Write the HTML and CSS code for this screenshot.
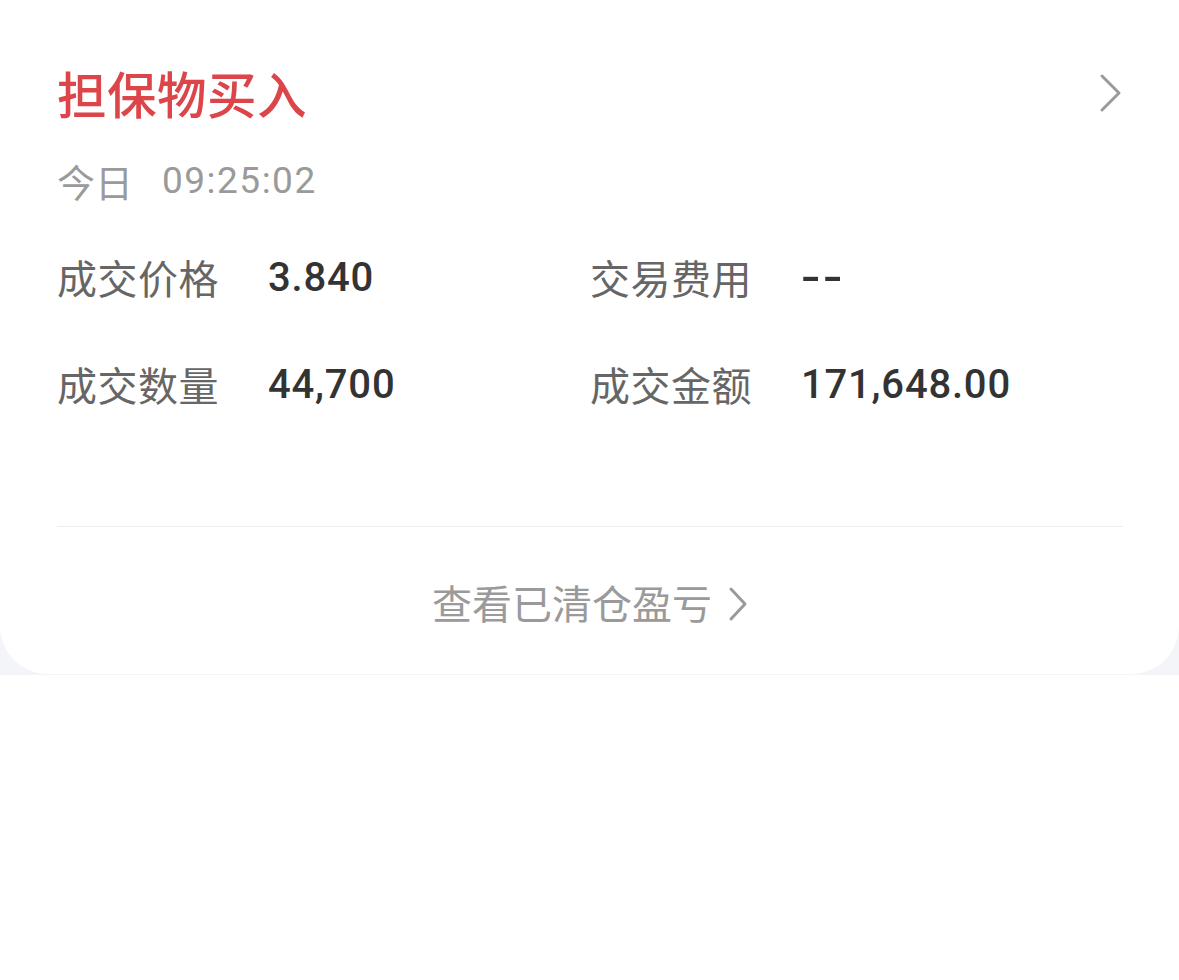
FILE: index.html
```html
<!DOCTYPE html>
<html lang="zh">
<head>
<meta charset="utf-8">
<title>担保物买入</title>
<link rel="stylesheet" href="styles.css">
</head>
<body>
<div class="wrap">
  <div class="card">
    <div class="head">
      <div class="title">担保物买入</div>
      <svg class="chev" width="24" height="40" viewBox="0 0 24 40"><path d="M3 3 L20 20 L3 37" fill="none" stroke="#9a9a9a" stroke-width="3" stroke-linecap="round" stroke-linejoin="round"/></svg>
    </div>
    <div class="time"><span class="day">今日</span><span class="clock">09:25:02</span></div>
    <div class="grid">
      <div class="cell"><span class="label">成交价格</span><span class="value">3.840</span></div>
      <div class="cell"><span class="label">交易费用</span><span class="value dash">--</span></div>
      <div class="cell"><span class="label">成交数量</span><span class="value">44,700</span></div>
      <div class="cell"><span class="label">成交金额</span><span class="value">171,648.00</span></div>
    </div>
    <div class="divider"></div>
    <div class="foot">
      <span class="link">查看已清仓盈亏</span>
      <svg class="chev-s" width="20" height="36" viewBox="0 0 20 36"><path d="M3 3 L17 18 L3 33" fill="none" stroke="#9a9a9a" stroke-width="3" stroke-linecap="round" stroke-linejoin="round"/></svg>
    </div>
  </div>
</div>
</body>
</html>
```

FILE: styles.css
```css
html, body {
  margin: 0;
  padding: 0;
  background: #ffffff;
}
body {
  font-family: "Noto Sans CJK SC", "Noto Sans", sans-serif;
}
.wrap {
  background: #f4f5f9;
  height: 675px;
}
.card {
  background: #ffffff;
  height: 674px;
  box-sizing: border-box;
  border-radius: 0 0 48px 48px;
  padding: 58px 56px 0 57px;
}
.head {
  display: flex;
  justify-content: space-between;
  align-items: center;
  height: 70px;
}
.title {
  color: #dc454a;
  font-size: 49.5px;
  font-weight: 500;
  line-height: 70px;
  letter-spacing: 0.5px;
}
.chev {
  display: block;
}
.time {
  margin-top: 28px;
  height: 50px;
  line-height: 50px;
  color: #9a9a9a;
  display: flex;
  align-items: center;
}
.day {
  font-size: 38px;
}
.clock {
  font-family: Roboto, "Noto Sans", sans-serif;
  font-size: 37px;
  margin-left: 29px;
  letter-spacing: 1.5px;
}
.grid {
  margin-top: 43px;
  display: grid;
  grid-template-columns: 533px 1fr;
  row-gap: 51px;
}
.cell {
  display: flex;
  align-items: center;
  height: 56px;
}
.label {
  width: 211px;
  flex: none;
  font-size: 40px;
  letter-spacing: 0.5px;
  color: #666666;
}
.value {
  font-family: Roboto, "Noto Sans", sans-serif;
  font-size: 40px;
  font-weight: 500;
  color: #333333;
  letter-spacing: 0.8px;
}
.value.dash {
  font-size: 44px;
  letter-spacing: 2px;
  transform: scaleX(1.3);
  transform-origin: left center;
}
.divider {
  margin-top: 114px;
  height: 1px;
  background: #eeeeee;
}
.foot {
  height: 147px;
  padding-top: 3px;
  box-sizing: border-box;
  display: flex;
  justify-content: center;
  align-items: center;
  gap: 16px;
}
.link {
  font-size: 40px;
  color: #9a9a9a;
  line-height: 56px;
}
.chev-s {
  display: block;
  margin-top: 4px;
}
```
